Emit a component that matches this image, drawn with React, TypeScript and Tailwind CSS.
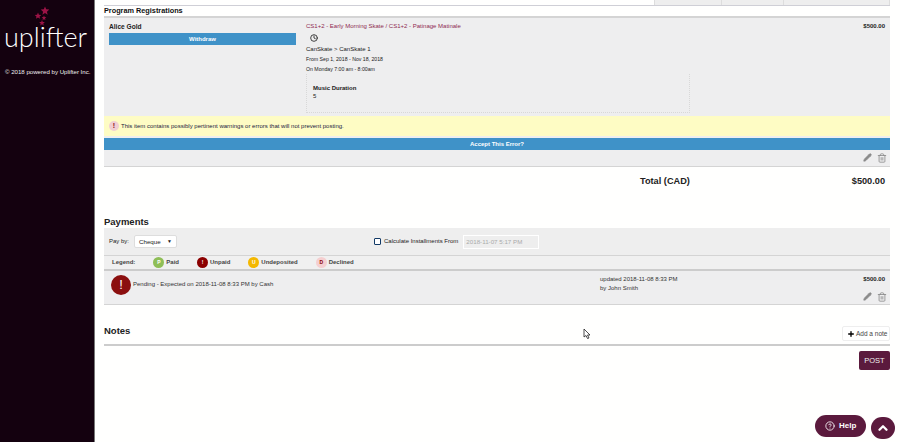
import { Pencil, Trash2, Plus, ChevronUp, CircleHelp, Clock } from "lucide-react";

function Star({ x, y, r }: { x: number; y: number; r: number }) {
  const points = Array.from({ length: 10 }, (_, i) => {
    const a = (Math.PI / 5) * i - Math.PI / 2;
    const d = i % 2 === 0 ? r : r * 0.45;
    return `${x + d * Math.cos(a)},${y + d * Math.sin(a)}`;
  }).join(" ");
  return <polygon points={points} fill="#9c1346" />;
}

function Sidebar() {
  return (
    <aside className="w-[95px] shrink-0 h-full bg-[#14010f] border-r border-[#777] relative text-white">
      <svg className="absolute left-[33px] top-[5px]" width="20" height="22">
        <Star x={12} y={6} r={4.5} />
        <Star x={5} y={11} r={3.5} />
        <Star x={11} y={13} r={2.5} />
        <Star x={9} y={18} r={3} />
      </svg>
      <div className="pt-[20px] pl-[4px] text-[27px] leading-[34px] font-light font-['Lato',sans-serif]">
        uplifter
      </div>
      <div className="mt-[4px] pl-[5px] text-[6.1px] leading-[28px] whitespace-nowrap text-[#eee]">
        © 2018 powered by Uplifter Inc.
      </div>
    </aside>
  );
}

function RowIcons() {
  return (
    <div className="flex justify-end gap-[5px] text-[#8a8a8a]">
      <Pencil size={9} fill="#8a8a8a" />
      <Trash2 size={10} />
    </div>
  );
}

function LegendDot({ color, text, label, textColor }: { color: string; text: string; label: string; textColor: string }) {
  return (
    <div className="flex items-center gap-[2px]">
      <span className={`w-[11px] h-[11px] rounded-full flex items-center justify-center text-[5px] font-bold ${color} ${textColor}`}>
        {text}
      </span>
      <span>{label}</span>
    </div>
  );
}

export default function App() {
  return (
    <div className="relative w-[900px] h-[442px] overflow-hidden flex bg-[#fffffe] text-[#222] font-['Liberation_Sans',Arial,sans-serif]">
      <Sidebar />
      <main className="flex-1 min-w-0 pl-[9px] pr-[10px]">
        <div className="h-[6px] border-b border-[#cfcfd6] flex justify-end">
          <div className="w-[68px] bg-[#eee] border-x border-[#ddd]" />
          <div className="w-[62px] bg-[#eee] border-r border-[#ddd]" />
          <div className="w-[106px] bg-[#eee] border-r border-[#ddd]" />
        </div>
        <div className="h-[10px] text-[7.3px] leading-[9px] font-bold text-[#111]">Program Registrations</div>
        <section className="h-[151px] bg-[#eeeeef] border-t-2 border-b border-[#d4d4d4] flex flex-col">
          <div className="flex h-[98px] shrink-0 pt-[4px] pl-[5px] pr-[5px]">
            <div className="w-[187px] shrink-0">
              <div className="text-[6.6px] leading-[9px] font-bold">Alice Gold</div>
              <div className="mt-[2px] h-[12px] bg-[#3f92c8] text-white text-[6px] leading-[12px] font-bold text-center">Withdraw</div>
            </div>
            <div className="ml-[10px] flex-1 min-w-0 text-[6px]">
              <div className="leading-[9px] text-[#8e2b50]">CS1+2 - Early Morning Skate / CS1+2 - Patinage Matinale</div>
              <Clock size={8} className="ml-[4px] mt-[3px] text-[#222]" strokeWidth={2.5} />
              <div className="mt-[3px] leading-[9px]">CanSkate &gt; CanSkate 1</div>
              <div className="mt-[1px] text-[5.2px] leading-[8px]">From Sep 1, 2018 - Nov 18, 2018</div>
              <div className="mt-[2px] text-[5.2px] leading-[8px]">On Monday 7:00 am - 8:00am</div>
              <div className="mt-[1px] w-[384px] h-[39px] border-x border-b border-dotted border-[#d8d8d8] pl-[6px] pt-[10px] text-[6px] leading-[8px]">
                <div className="font-bold">Music Duration</div>
                <div>5</div>
              </div>
            </div>
            <div className="text-[6px] leading-[9px] font-bold">$500.00</div>
          </div>
          <div className="h-[20px] shrink-0 bg-[#fefcc4] flex items-center pl-[5px] gap-[2px] text-[6px]">
            <span className="w-[10px] h-[10px] rounded-full bg-[#f1cfd3] text-[#8a1020] flex items-center justify-center font-bold text-[7px]">!</span>
            <span className="text-[#1a1a40]">This item contains possibly pertinent warnings or errors that will not prevent posting.</span>
          </div>
          <div className="mt-[2px] h-[12px] shrink-0 bg-[#3f92c8] text-white text-[6px] leading-[12px] font-bold text-center">Accept This Error?</div>
          <div className="pt-[3px] pr-[3px]"><RowIcons /></div>
        </section>
        <div className="flex h-[28px] pt-[8px] pr-[5px] text-[9.2px] leading-[12px] font-bold">
          <span className="ml-[536px]">Total (CAD)</span>
          <span className="ml-auto">$500.00</span>
        </div>
        <h2 className="mt-[20px] h-[13px] text-[9.5px] leading-[13px] font-bold text-[#222]">Payments</h2>
        <section className="h-[28px] bg-[#eee] border-b border-[#d4d4d4] flex items-center pl-[5px] text-[6px]">
          <span className="w-[25px] shrink-0">Pay by:</span>
          <div className="w-[43px] h-[13px] bg-white rounded-[2px] border border-[#ddd] flex items-center justify-between px-[4px] text-[6.2px]">
            <span>Cheque</span>
            <span className="text-[5px]">▼</span>
          </div>
          <span className="ml-[197px] w-[7px] h-[7px] border border-[#123a66] rounded-[1px] bg-white" />
          <span className="ml-[3px]">Calculate Installments From</span>
          <div className="ml-[5px] w-[76px] h-[14px] border border-white bg-[#eee] text-[#aaa] text-[6.2px] leading-[12px] pl-[2px]">2018-11-07 5:17 PM</div>
        </section>
        <section className="h-[15px] bg-[#f0f0f0] border-b-2 border-[#ccc] flex items-center pl-[8px] gap-[18px] text-[6px] font-bold text-[#444]">
          <span>Legend:</span>
          <LegendDot color="bg-[#8fbe57]" textColor="text-white" text="P" label="Paid" />
          <LegendDot color="bg-[#8b0000]" textColor="text-white" text="!" label="Unpaid" />
          <LegendDot color="bg-[#f4b800]" textColor="text-white" text="U" label="Undeposited" />
          <LegendDot color="bg-[#f5cfd0]" textColor="text-[#8b0000]" text="D" label="Declined" />
        </section>
        <section className="h-[34px] bg-[#eeeeef] border-b border-[#d4d4d4] flex pl-[7px] pr-[3px]">
          <div className="mt-[4px] w-[20px] h-[20px] rounded-full bg-[#8b0f0f] text-white flex items-center justify-center text-[13px] shrink-0">!</div>
          <div className="ml-[2px] mt-[9px] text-[6px] leading-[9px] w-[467px] shrink-0 text-[#333]">Pending - Expected on 2018-11-08 8:33 PM by Cash</div>
          <div className="mt-[4px] text-[6px] leading-[9px] text-[#333]">
            <div>updated 2018-11-08 8:33 PM</div>
            <div>by John Smith</div>
          </div>
          <div className="ml-auto pt-[4px] flex flex-col">
            <div className="text-right pr-[2px] text-[6px] leading-[9px] font-bold">$500.00</div>
            <div className="mt-[8px]"><RowIcons /></div>
          </div>
        </section>
        <div className="mt-[20px] h-[21px] border-b-2 border-[#ccc] flex items-start justify-between">
          <h2 className="text-[9.5px] leading-[12px] font-bold text-[#222]">Notes</h2>
          <div className="mt-[1px] w-[48px] h-[15px] bg-white rounded-[2px] border border-[#eee] flex items-center pl-[4px] gap-[1px] text-[6.5px] text-[#444]">
            <Plus size={8} strokeWidth={4} className="text-black shrink-0" />
            <span className="whitespace-nowrap">Add a note</span>
          </div>
        </div>
        <div className="mt-[5px] flex justify-end">
          <div className="w-[31px] h-[19px] bg-[#5b1a3d] rounded-[2px] text-[#eee] text-[7.5px] leading-[19px] text-center">POST</div>
        </div>
      </main>
      <div className="absolute left-[815px] top-[415px] w-[51px] h-[22px] rounded-full bg-[#5b1a3d] text-white flex items-center pl-[10px] gap-[4px] text-[8px] font-bold">
        <CircleHelp size={10} />
        <span>Help</span>
      </div>
      <div className="absolute left-[871px] top-[417px] w-[24px] h-[22px] rounded-full bg-[#5b1a3d] text-white flex items-center justify-center">
        <ChevronUp size={14} strokeWidth={4} />
      </div>
      <svg className="absolute left-[583px] top-[328px]" width="8" height="12" viewBox="0 0 8 12">
        <path d="M1 1 L1 9 L3 7.5 L4.5 10.5 L6 10 L4.5 7 L7 7 Z" fill="#fff" stroke="#222" strokeWidth="0.8" />
      </svg>
    </div>
  );
}
